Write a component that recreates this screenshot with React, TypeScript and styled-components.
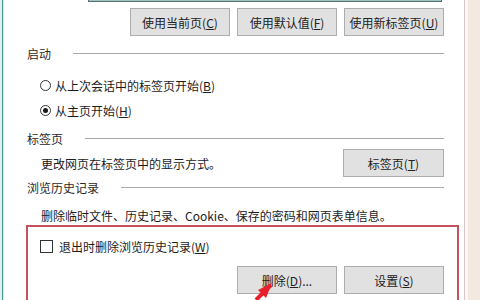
import React from "react";
import styled, { createGlobalStyle } from "styled-components";

const Global = createGlobalStyle`
  html, body { margin: 0; padding: 0; background: #ffffff; }
  body { font-family: "Noto Sans CJK SC", "Noto Sans", sans-serif; font-size: 12px; color: #1c1c1c; }
`;

const Frame = styled.div`
  position: relative;
  width: 480px;
  height: 300px;
  overflow: hidden;
  display: flex;
  align-items: flex-start;
  background: #fff;
`;

const LeftEdge = styled.div`
  width: 4px;
  height: 300px;
  flex: none;
  background: linear-gradient(to right, #e6eeee 0 2px, #3f9c9a 2px 3px, #d6e6e4 3px 4px);
`;

const RightEdge = styled.div`
  width: 15px;
  height: 300px;
  flex: none;
  border-left: 1px solid #d8c6c6;
  background: linear-gradient(to right, #fbf7f3 0 3px, #f3e9e1 3px);
`;

const Content = styled.div`
  flex: 1;
  display: flex;
  flex-direction: column;
  padding: 0 20px 0 23px;
  min-width: 0;
  & > * { flex: none; }
`;

const UrlBox = styled.div`
  height: 18px;
  margin-top: -17px;
  margin-left: 61px;
  margin-right: 2px;
  border: 1px solid #56706f;
  border-top: none;
  box-shadow: inset 0 -1px 0 #9fc4c2;
`;

const ButtonRow = styled.div<{ $top: number }>`
  display: flex;
  justify-content: flex-end;
  gap: 7px;
  margin-top: ${(p) => p.$top}px;
  flex: none;
`;

const Button = styled.div<{ $w?: number }>`
  width: ${(p) => p.$w ?? 100}px;
  height: 28px;
  flex: none;
  box-sizing: border-box;
  border: 1px solid #adadad;
  background: #e1e1e1;
  display: flex;
  align-items: center;
  justify-content: center;
  color: #222;
  white-space: nowrap;
  u { text-decoration: underline; text-underline-offset: 1px; }
`;

const Header = styled.div<{ $top: number }>`
  display: flex;
  align-items: center;
  gap: 22px;
  height: 16px;
  margin-top: ${(p) => p.$top}px;
  color: #2a2a2a;
`;

const Rule = styled.div`
  flex: 1;
  height: 1px;
  background: #a9a9a9;
`;

const OptionRow = styled.div<{ $top: number }>`
  display: flex;
  align-items: center;
  gap: 4px;
  height: 20px;
  flex: none;
  margin-top: ${(p) => p.$top}px;
  padding-left: 13px;
  white-space: nowrap;
  u { text-decoration: underline; text-underline-offset: 1px; }
`;

const Radio = styled.span<{ $on?: boolean }>`
  width: 11px;
  height: 11px;
  box-sizing: border-box;
  border-radius: 50%;
  border: 1px solid #333;
  display: flex;
  align-items: center;
  justify-content: center;
  &::after {
    content: "";
    width: 5px;
    height: 5px;
    border-radius: 50%;
    background: ${(p) => (p.$on ? "#1a1a1a" : "transparent")};
  }
`;

const Check = styled.span`
  width: 13px;
  height: 13px;
  box-sizing: border-box;
  border: 1px solid #333;
  background: #fff;
  margin-right: 2px;
`;

const DescRow = styled.div<{ $top: number }>`
  display: flex;
  align-items: center;
  justify-content: space-between;
  margin-top: ${(p) => p.$top}px;
  padding-left: 14px;
  height: 20px;
  white-space: nowrap;
`;

const TabRow = styled(DescRow)`
  height: 28px;
`;

const Highlight = styled.div`
  margin: 0 -15px 0 -1px;
  border: 2px solid #c4525c;
  padding: 9px 13px 20px 12px;
  display: flex;
  flex-direction: column;
`;

const BoxOption = styled(OptionRow)`
  padding-left: 0;
`;

const Arrow = styled.svg`
  position: absolute;
  left: 244px;
  top: 280px;
  width: 36px;
  height: 20px;
`;

export default function App() {
  return (
    <>
      <Global />
      <Frame>
        <LeftEdge />
        <Content>
          <UrlBox />
          <ButtonRow $top={6}>
            <Button>使用当前页(<u>C</u>)</Button>
            <Button>使用默认值(<u>F</u>)</Button>
            <Button>使用新标签页(<u>U</u>)</Button>
          </ButtonRow>

          <Header $top={9}>
            <span>启动</span>
            <Rule />
          </Header>
          <OptionRow $top={14}>
            <Radio />
            <span>从上次会话中的标签页开始(<u>B</u>)</span>
          </OptionRow>
          <OptionRow $top={5}>
            <Radio $on />
            <span>从主页开始(<u>H</u>)</span>
          </OptionRow>

          <Header $top={10}>
            <span>标签页</span>
            <Rule />
          </Header>
          <TabRow $top={3}>
            <span>更改网页在标签页中的显示方式。</span>
            <Button $w={101}>标签页(<u>T</u>)</Button>
          </TabRow>

          <Header $top={2}>
            <span>浏览历史记录</span>
            <Rule />
          </Header>
          <DescRow $top={10}>
            <span>删除临时文件、历史记录、Cookie、保存的密码和网页表单信息。</span>
          </DescRow>

          <Highlight>
            <BoxOption $top={0}>
              <Check />
              <span>退出时删除浏览历史记录(<u>W</u>)</span>
            </BoxOption>
            <ButtonRow $top={10}>
              <Button>删除(<u>D</u>)...</Button>
              <Button>设置(<u>S</u>)</Button>
            </ButtonRow>
          </Highlight>
        </Content>
        <RightEdge />
        <Arrow viewBox="0 0 36 20">
          <path d="M27 5 L12 20" stroke="#e8202c" strokeWidth="4" fill="none" />
          <polygon points="28,3 14,10 22,18" fill="#e8202c" />
        </Arrow>
      </Frame>
    </>
  );
}
